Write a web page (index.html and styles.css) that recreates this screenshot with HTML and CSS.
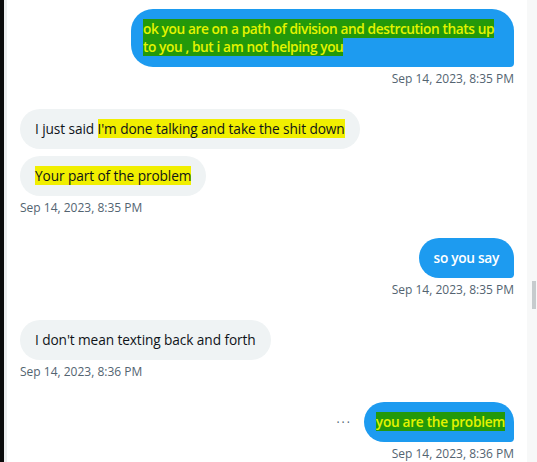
FILE: index.html
```html
<!DOCTYPE html>
<html>
<head>
<meta charset="utf-8">
<link rel="stylesheet" href="styles.css">
</head>
<body>
<div class="edge"></div>
<main class="chat">
  <div class="group sent">
    <div class="bubble sent-bubble wide"><span class="mark-green">ok you are on a path of division and destrcution thats up to you , but i am not helping you</span></div>
    <div class="time">Sep 14, 2023, 8:35 PM</div>
  </div>
  <div class="group received">
    <div class="bubble recv-bubble">I just said <span class="mark-yellow">I'm done talking and take the shit down</span></div>
    <div class="bubble recv-bubble"><span class="mark-yellow">Your part of the problem</span></div>
    <div class="time">Sep 14, 2023, 8:35 PM</div>
  </div>
  <div class="group sent">
    <div class="bubble sent-bubble">so you say</div>
    <div class="time">Sep 14, 2023, 8:35 PM</div>
  </div>
  <div class="group received">
    <div class="bubble recv-bubble">I don't mean texting back and forth</div>
    <div class="time">Sep 14, 2023, 8:36 PM</div>
  </div>
  <div class="group sent">
    <div class="row">
      <span class="more">···</span>
      <div class="bubble sent-bubble tight"><span class="mark-green">you are the problem</span></div>
    </div>
    <div class="time">Sep 14, 2023, 8:36 PM</div>
  </div>
</main>
<div class="scrollbar"><div class="thumb"></div></div>
</body>
</html>
```

FILE: styles.css
```css
html, body {
  margin: 0;
  padding: 0;
  height: 100%;
  overflow: hidden;
  background: #ffffff;
}
body {
  display: flex;
  font-family: "Open Sans", "Noto Sans", sans-serif;
  color: #0f1419;
}
.edge {
  width: 4px;
  background: #0b0b0b;
  border-right: 3px solid #eceeef;
  flex: none;
}
.chat {
  flex: 1;
  display: flex;
  flex-direction: column;
  gap: 22px;
  padding: 9px 13px 0 13px;
}
.group {
  display: flex;
  flex-direction: column;
  gap: 7px;
}
.group.sent { align-items: flex-end; }
.group.received { align-items: flex-start; }
.bubble {
  font-size: 13.7px;
  line-height: 18px;
  padding: 11px 15px;
  border-radius: 22px;
}
.sent-bubble {
  background: #1d9bf0;
  color: #ffffff;
  font-weight: 600;
  border-bottom-right-radius: 4px;
  letter-spacing: -0.3px;
}
.wide {
  max-width: 355px;
  padding-left: 12px;
  padding-right: 16px;
  letter-spacing: -0.4px;
}
.tight { padding-left: 12px; padding-right: 9px; }
.recv-bubble {
  background: #eff3f4;
  color: #0f1419;
  letter-spacing: -0.1px;
}
.mark-green {
  background: #23990a;
  color: #e3f400;
}
.mark-yellow {
  background: #f1ef00;
}
.time {
  margin-top: -3px;
  font-size: 12px;
  line-height: 16px;
  color: #536471;
}
.row {
  display: flex;
  align-items: center;
  gap: 12px;
}
.more {
  color: #536471;
  font-size: 12px;
  letter-spacing: 2px;
}
.scrollbar {
  width: 10px;
  flex: none;
  background: #f7f8f8;
  position: relative;
}
.thumb {
  position: absolute;
  left: 5px;
  right: 1px;
  top: 281px;
  height: 28px;
  background: #c6cbcd;
}
```
